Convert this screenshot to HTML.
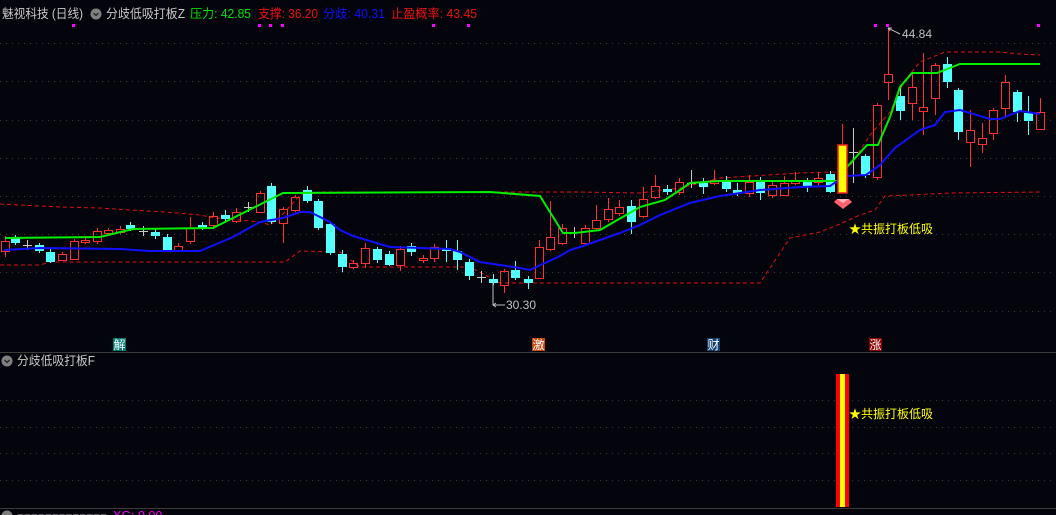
<!DOCTYPE html>
<html><head><meta charset="utf-8"><style>
html,body{margin:0;padding:0;background:#04040c;width:1056px;height:515px;overflow:hidden}
svg{display:block}
text{font-family:"Liberation Sans","Noto Sans CJK SC",sans-serif}
</style></head><body>
<svg id="s" width="1056" height="515" viewBox="0 0 1056 515" xmlns="http://www.w3.org/2000/svg">
<rect width="1056" height="515" fill="#04040c"/>
<g stroke="#3c3c3c" stroke-width="1" stroke-dasharray="1,5">
<line x1="0" y1="43.5" x2="1056" y2="43.5"/><line x1="0" y1="81.5" x2="1056" y2="81.5"/>
<line x1="0" y1="120.5" x2="1056" y2="120.5"/><line x1="0" y1="158.5" x2="1056" y2="158.5"/>
<line x1="0" y1="196.5" x2="1056" y2="196.5"/><line x1="0" y1="234.5" x2="1056" y2="234.5"/>
<line x1="0" y1="272.5" x2="1056" y2="272.5"/><line x1="0" y1="311.5" x2="1056" y2="311.5"/>
<line x1="0" y1="400.5" x2="1056" y2="400.5"/><line x1="0" y1="427.5" x2="1056" y2="427.5"/>
<line x1="0" y1="453.5" x2="1056" y2="453.5"/><line x1="0" y1="480.5" x2="1056" y2="480.5"/>
</g>
<line x1="0" y1="352.5" x2="1056" y2="352.5" stroke="#3a3a3a"/>
<line x1="0" y1="508.5" x2="1056" y2="508.5" stroke="#3a3a3a"/>
<polyline fill="none" stroke="#e01010" stroke-width="1" stroke-dasharray="4,3" points="0,204 60,207 100,208 130,210 165,212 200,215 215,218 240,220 260,222 270,225 283,214 300,195 320,192 580,192 640,193 680,188 720,178 800,173 835,172 850,166 870,135 890,112 905,80 920,62 945,52 1000,52 1020,54 1040,55"/>
<polyline fill="none" stroke="#e01010" stroke-width="1" stroke-dasharray="4,3" points="0,265 40,265 50,262 285,262 300,251 340,252 360,267 470,267 500,283 760,283 790,238 820,232 840,224 860,215 875,210 885,196 910,195 950,193 1040,192"/>
<g fill="#ff00ff">
<rect x="72" y="24" width="3" height="3"/><rect x="258" y="24" width="3" height="3"/><rect x="269" y="24" width="3" height="3"/><rect x="281" y="24" width="3" height="3"/><rect x="432" y="24" width="3" height="3"/><rect x="467" y="24" width="3" height="3"/><rect x="874" y="24" width="3" height="3"/><rect x="886" y="24" width="3" height="3"/><rect x="1037" y="24" width="3" height="3"/>
</g>
<g id="c"></g>
<polyline fill="none" stroke="#00ee00" stroke-width="2" points="5,238 100,237 133,229 213,228 283,193 490,192 540,196 563,233 575,233 600,230 640,207 665,200 680,190 690,183 720,181 840,181 847,167 867,145 878,145 890,117 900,87 912,73 937,73 960,64 1040,64"/>
<polyline fill="none" stroke="#1010ff" stroke-width="2" points="4,250 40,248 120,249 150,251 200,251 233,237 260,222 283,218 300,212 310,212 330,222 340,230 353,236 390,247 450,249 460,252 480,262 500,265 520,268 530,270 545,263 560,256 570,250 580,247 600,240 620,233 640,225 660,215 690,203 720,196 760,190 800,187 830,186 845,176 866,175 880,165 895,148 920,130 935,125 945,112 960,110 990,119 1000,119 1020,111 1040,114"/>
<line x1="842.5" y1="124" x2="842.5" y2="193" stroke="#ff2020"/>
<rect x="838" y="145" width="9" height="48" fill="#ffff00" stroke="#ff2020" stroke-width="1.5"/>
<path d="M837,199 L849,199 L852,202 L843,209 L834,202 Z" fill="#ff6070"/><path d="M837,199 L849,199 L843,203 Z" fill="#ffb0b8"/>
<text x="849" y="233" font-size="12" fill="#ffff00">★共振打板低吸</text>
<path d="M888,28 L900,34" stroke="#c0c0c0" fill="none"/><path d="M888,28 l4,0 M888,28 l2,3" stroke="#c0c0c0"/>
<text x="902" y="38" font-size="12" fill="#c0c0c0">44.84</text>
<path d="M493,305 L505,305 M493,305 l3,-2 M493,305 l3,2" stroke="#c0c0c0" fill="none"/>
<line x1="493" y1="280" x2="493" y2="305" stroke="#c0c0c0"/>
<text x="506" y="309" font-size="12" fill="#c0c0c0">30.30</text>
<rect x="113" y="338" width="13" height="13" fill="#007870"/><text x="113.5" y="349" font-size="12" fill="#fff">解</text>
<rect x="532" y="338" width="13" height="13" fill="#c04810"/><text x="532.5" y="349" font-size="12" fill="#fff">激</text>
<rect x="707" y="338" width="13" height="13" fill="#104070"/><text x="707.5" y="349" font-size="12" fill="#fff">财</text>
<rect x="869" y="338" width="13" height="13" fill="#900000"/><text x="869.5" y="349" font-size="12" fill="#fff">涨</text>
<text x="2" y="18" font-size="12.5" fill="#c8c8c8" textLength="81" lengthAdjust="spacingAndGlyphs">魅视科技 (日线)</text>
<circle cx="96" cy="14" r="5.5" fill="#808080"/><path d="M93.5,13 L96,15.5 L98.5,13" stroke="#222" stroke-width="1.3" fill="none"/>
<text x="106" y="18" font-size="12.5" fill="#c8c8c8" textLength="79" lengthAdjust="spacingAndGlyphs">分歧低吸打板Z</text>
<text x="190" y="18" font-size="12.5" fill="#00e000" textLength="61" lengthAdjust="spacingAndGlyphs">压力: 42.85</text>
<text x="258" y="18" font-size="12.5" fill="#ee1010" textLength="60" lengthAdjust="spacingAndGlyphs">支撑: 36.20</text>
<text x="323" y="18" font-size="12.5" fill="#1010ff" textLength="62" lengthAdjust="spacingAndGlyphs">分歧: 40.31</text>
<text x="391" y="18" font-size="12.5" fill="#ee1010" textLength="86" lengthAdjust="spacingAndGlyphs">止盈概率: 43.45</text>
<circle cx="7" cy="361" r="5.5" fill="#808080"/><path d="M4.5,360 L7,362.5 L9.5,360" stroke="#222" stroke-width="1.3" fill="none"/>
<text x="17" y="365" font-size="12.5" fill="#c8c8c8" textLength="78" lengthAdjust="spacingAndGlyphs">分歧低吸打板F</text>
<rect x="836" y="374" width="13" height="133" fill="#ff0000"/><rect x="840" y="374" width="5" height="133" fill="#ffff00"/>
<text x="849" y="418" font-size="12" fill="#ffff00">★共振打板低吸</text>
<circle cx="7" cy="516" r="5.5" fill="#808080"/>
<text x="17" y="520" font-size="12.5" fill="#c8c8c8" textLength="90" lengthAdjust="spacingAndGlyphs">ーーーーーーーーーーーーー</text>
<text x="113" y="520" font-size="12.5" fill="#ff00ff">XG: 0.00</text>
</svg>
<script>
var d=[
[5,241,251,236,257,'r'],[15,238,243,235,245,'c'],[27,245,245,240,250,'g'],[39,245,251,243,253,'c'],[50,252,262,249,263,'c'],[62,254,260,252,261,'r'],[74,241,259,239,260,'r'],[85,240,242,236,244,'r'],[97,231,241,228,244,'r'],[108,230,233,228,236,'r'],[120,229,232,226,234,'r'],[130,225,229,222,231,'c'],[143,231,231,226,236,'g'],[155,232,236,229,239,'c'],[167,237,251,234,252,'c'],[178,246,251,243,252,'r'],[190,228,241,217,244,'r'],[202,225,228,222,230,'c'],[213,216,225,212,227,'r'],[225,215,219,210,221,'c'],[236,212,221,208,223,'r'],[248,207,207,202,212,'g'],[260,193,212,191,213,'r'],[271,186,222,183,224,'c'],[283,209,223,207,243,'r'],[295,197,210,195,212,'r'],[307,190,201,186,203,'c'],[318,201,228,199,230,'c'],[330,224,253,222,255,'c'],[342,254,267,250,272,'c'],
[353,263,267,260,269,'r'],[365,248,263,243,268,'r'],[377,249,260,247,263,'c'],[389,254,265,251,266,'c'],[400,249,265,246,271,'r'],[411,246,252,243,256,'c'],[423,258,260,255,263,'r'],[434,247,258,244,262,'r'],[446,248,251,240,262,'c'],[457,251,260,240,270,'c'],[469,262,276,259,280,'c'],[481,277,277,271,283,'g'],[493,279,283,274,285,'c'],[504,271,285,269,293,'r'],[515,270,278,261,280,'c'],[528,279,283,276,289,'c'],[539,247,278,240,279,'r'],[550,237,249,201,251,'r'],
[562,228,243,224,245,'r'],[574,232,232,227,238,'g'],[585,228,243,225,245,'r'],[596,220,228,205,230,'r'],[608,209,219,198,222,'r'],[619,207,213,200,216,'r'],[631,206,222,200,234,'c'],[643,199,216,187,218,'r'],[655,186,197,175,199,'r'],[667,189,192,185,195,'c'],[679,182,192,178,195,'r'],[691,183,183,170,188,'g'],[703,183,187,178,194,'c'],[714,180,183,170,185,'r'],[726,182,189,176,192,'c'],[737,190,193,183,196,'c'],[749,182,193,175,197,'r'],[760,180,193,177,200,'c'],[772,185,195,182,198,'r'],[784,183,195,176,196,'r'],[795,180,183,172,185,'r'],[807,182,186,178,192,'c'],[818,178,182,172,185,'r'],[830,174,192,171,193,'c'],
[853,152,152,128,183,'g'],[865,156,175,154,178,'c'],[877,105,177,103,180,'r'],[888,74,82,28,100,'r'],[900,96,111,85,120,'c'],[912,87,103,73,120,'r'],[923,107,111,53,135,'r'],[935,65,98,63,115,'r'],[947,64,82,57,88,'c'],[958,90,132,88,140,'c'],[970,130,142,110,167,'r'],[982,138,144,123,153,'r'],[993,110,133,108,140,'r'],[1005,82,108,75,118,'r'],[1017,92,112,90,122,'c'],[1028,113,121,96,135,'c'],[1040,112,129,98,130,'r']];
var s='';
d.forEach(function(e){var x=e[0],t=Math.min(e[1],e[2]),b=Math.max(e[1],e[2]);
if(e[5]=='g'){s+='<line x1="'+(x+.5)+'" y1="'+e[3]+'" x2="'+(x+.5)+'" y2="'+e[4]+'" stroke="#c8c8c8"/><line x1="'+(x-4)+'" y1="'+(t+.5)+'" x2="'+(x+5)+'" y2="'+(t+.5)+'" stroke="#c8c8c8"/>';}
else if(e[5]=='r'){s+='<line x1="'+(x+.5)+'" y1="'+e[3]+'" x2="'+(x+.5)+'" y2="'+t+'" stroke="#ff3030"/><line x1="'+(x+.5)+'" y1="'+b+'" x2="'+(x+.5)+'" y2="'+e[4]+'" stroke="#ff3030"/><rect x="'+(x-3.5)+'" y="'+(t+.5)+'" width="8" height="'+Math.max(1,b-t)+'" fill="none" stroke="#ff3030"/>';}
else{s+='<line x1="'+(x+.5)+'" y1="'+e[3]+'" x2="'+(x+.5)+'" y2="'+e[4]+'" stroke="#54ffff"/><rect x="'+(x-4)+'" y="'+t+'" width="9" height="'+Math.max(2,b-t)+'" fill="#54ffff"/>';}
});
document.getElementById('c').innerHTML=s;
</script>
</body></html>
